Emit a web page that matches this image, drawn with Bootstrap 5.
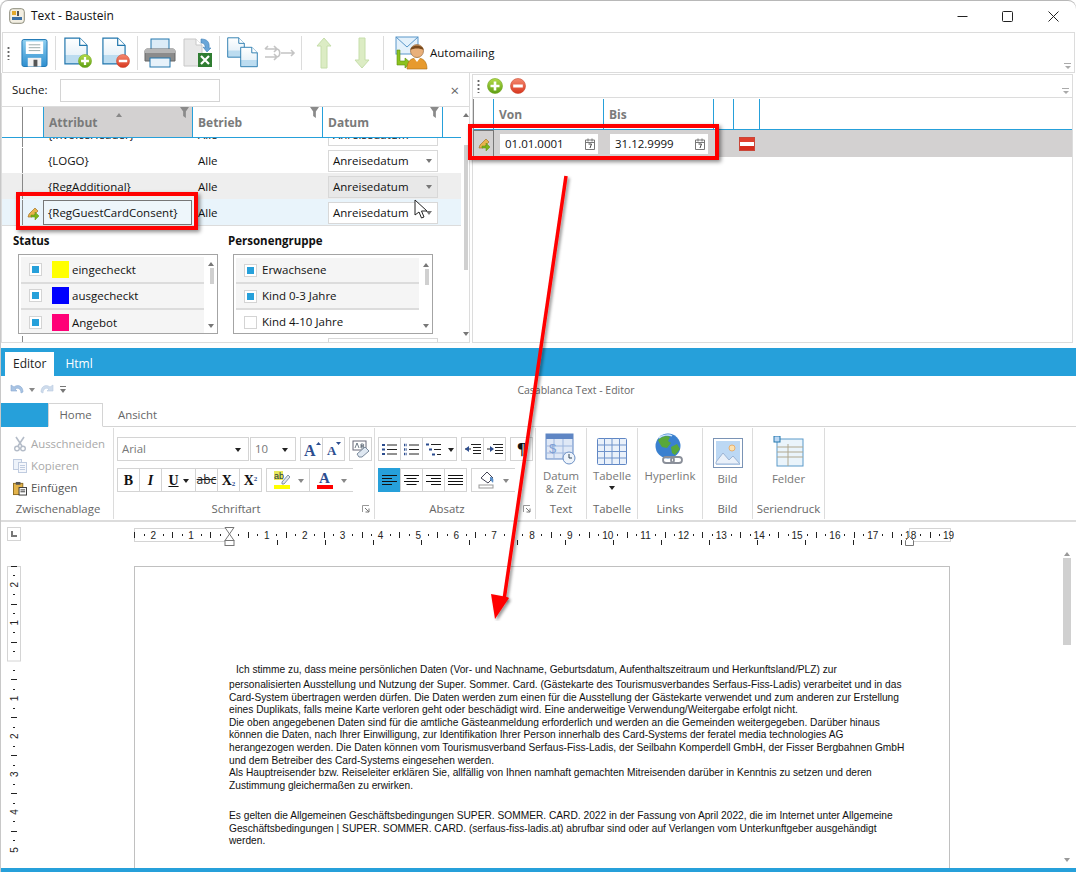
<!DOCTYPE html>
<html lang="de">
<head>
  <meta charset="UTF-8">
  <title>Text - Baustein</title>
  <link href="https://cdn.jsdelivr.net/npm/bootstrap@5.3.0/dist/css/bootstrap.min.css" rel="stylesheet">
  <style>
    body { margin: 0; background: #fff; font-family: "Open Sans", "Liberation Sans", sans-serif; font-size: 11.5px; color: #111; }
    .app-window { width: 1076px; height: 872px; overflow: hidden; position: relative; border-left: 1px solid #c8c8c8; border-radius: 8px 8px 0 0; box-shadow: inset 0 1px 0 #b8b8b8; }
    .icon-defs { display: block; width: 0; height: 0; }
    .flex-none { flex: none; }

    /* title bar */
    .title-bar { height: 32px; padding-left: 8px; font-size: 12px; }
    .title-icon { margin-right: 6px; }
    .win-btn { width: 45.5px; height: 30px; }

    /* toolbar */
    .tool-bar { height: 41px; margin: 0 1px; border: 1px solid #dcdcdc; position: relative; flex: none; }
    .grip { width: 3px; height: 14px; margin: 0 5px 0 4px; background: radial-gradient(circle, #666 1px, transparent 1.2px) 0 0 / 3px 4px; flex: none; }
    .tb-btn { width: 38px; flex: none; }
    .tb-sep { width: 1px; height: 34px; background: #dcdcdc; margin: 0 3px 0 2px; flex: none; }
    .more-arrow { position: absolute; right: 3px; bottom: 3px; width: 7px; height: 6px; border-top: 1px solid #aaa; }
    .more-arrow::after { content: ""; position: absolute; left: 1px; top: 2px; border: 3px solid transparent; border-top: 3px solid #aaa; }
    .tool-label { margin-left: 1px; }

    /* top panels */
    .panels { height: 275px; flex: none; }
    .left-panel { width: 469px; height: 270px; border: 1px solid #dcdcdc; border-top: 0; flex: none; overflow: hidden; }
    .search-bar { height: 34px; border-bottom: 1px solid #dcdcdc; padding: 1px 0 0 10px; }
    .search-input { width: 160px; height: 23px; margin-left: 13px; border: 1px solid #d4d4d4; }
    .search-x { margin-left: auto; margin-right: 10px; color: #666; font-size: 15px; line-height: 1; }
    .grid-side { width: 459px; flex: none; }
    .grid-head { height: 31px; border-bottom: 1px solid #26a0da; }
    .cell-gutter { width: 20px; flex: none; }
    .cell-select { width: 21px; flex: none; align-self: stretch; border-left: 1px solid #888; }
    .cell-attr { width: 149px; flex: none; padding-left: 5px; }
    .cell-firm { width: 130px; flex: none; padding-left: 6px; }
    .cell-date { width: 120px; flex: none; padding-left: 6px; }
    .head-cell { align-self: stretch; border-left: 1px solid #26a0da; font-weight: 700; color: #7a7a7a; font-size: 12px; position: relative; padding-top: 7px; padding-left: 5px; }
    .head-end { border-left: 1px solid #26a0da; align-self: stretch; width: 1px; }
    .head-sorted { background: #d3d1d1; }
    .funnel { position: absolute; right: 3px; top: 0; }
    .sort-up { position: absolute; left: 72px; top: 3px; border: 3px solid transparent; border-bottom: 4px solid #888; }
    .grid-body { height: 204px; overflow: hidden; }
    .grid-row { height: 26px; padding-top: 1px; }
    .row-clipped { margin-top: -17px; height: 26px; }
    .row-alt { background: #eee; }
    .row-sel { background: #e9f4fb; }
    .cell-edit { align-self: stretch; border: 1px solid #777; background: #eef6fb; display: flex; align-items: center; padding-left: 4px; }
    .combo { width: 110px; height: 22px; border: 1px solid #d8d8d8; background: #fff; padding-left: 4px; display: flex; align-items: center; justify-content: space-between; padding-right: 5px; }
    .row-alt .combo { background: #e8e8e8; }
    .combo::after { content: ""; border: 3.5px solid transparent; border-top: 4px solid #777; margin-top: 4px; }
    .filter-area { height: 110px; border-top: 1px solid #dcdcdc; padding-left: 11px; position: relative; }
    .filter-col { width: 215px; flex: none; }
    .filter-title { font-weight: 700; font-size: 11.5px; height: 28px; padding-top: 6px; }
    .filter-box { width: 200px; height: 80px; margin-left: 5px; border: 1px solid #a4a4a4; padding: 3px 2px 0; overflow: hidden; }
    .filter-box.status-box { padding-top: 2px; }
    .filter-list { width: 183px; flex: none; }
    .filter-item { height: 26px; border-bottom: 2px solid #dcdcdc; background: #f5f5f5; flex: none; }
    .filter-item.tall { height: 26.5px; }
    .filter-item.plain { background: #fff; border: 0; padding-bottom: 2px; }
    .chk { width: 13px; height: 13px; border: 1px solid #d4d4d4; background: #fff; padding: 2px; margin: 0 5px 0 8px; flex: none; }
    .tall .chk { margin-right: 7px; }
    .chk.on::before { content: ""; display: block; width: 7px; height: 7px; background: #26a0da; }
    .swatch { width: 17px; height: 17px; margin: 0 3px 0 3px; flex: none; }
    .swatch-yellow { background: #ff0; }
    .swatch-blue { background: #00f; }
    .swatch-pink { background: #f07; }
    .mini-scroll { width: 13px; position: relative; flex: none; margin-left: 1px; }
    .mini-thumb { width: 4px; height: 16px; background: #d0d0d0; margin: 11px auto 0; }
    .mini-scroll::before, .mini-scroll::after { content: ""; position: absolute; left: 3px; border: 3px solid transparent; }
    .mini-scroll::before { top: 2px; border-bottom: 4px solid #777; }
    .mini-scroll::after { bottom: 2px; border-top: 4px solid #777; }
    .panel-scroll { width: 10px; position: relative; flex: none; }
    .panel-thumb { width: 4px; height: 125px; background: #d0d0d0; margin: 38px auto 0; }
    .panel-scroll::before, .panel-scroll::after { content: ""; position: absolute; left: 2px; border: 3px solid transparent; }
    .panel-scroll::before { top: 3px; border-bottom: 4px solid #777; }
    .panel-scroll::after { bottom: 3px; border-top: 4px solid #777; }

    .right-panel { width: 601px; height: 269px; border: 1px solid #dcdcdc; margin: 1px 0 0 2px; flex: none; overflow: hidden; }
    .right-bar { height: 23px; border-bottom: 1px solid #dcdcdc; position: relative; }
    .right-bar .grip { margin-right: 7px; }
    .badge-gap { margin-left: 7px; }
    .date-head { height: 31px; margin-top: 1px; border-bottom: 1px solid #26a0da; border-left: 1px solid #888; }
    .date-gutter { width: 19px; flex: none; }
    .date-col { border-left: 1px solid #26a0da; align-self: stretch; font-weight: 700; color: #7a7a7a; font-size: 12px; padding: 7px 0 0 5px; flex: none; }
    .col-von, .col-bis { width: 110px; }
    .col-x { width: 20px; padding: 0; }
    .col-y { width: 26px; padding: 0; }
    .date-row { height: 27px; background: #d3d1d1; }
    .date-select { width: 21px; align-self: stretch; border: 1px solid #777; flex: none; }
    .date-input { width: 98px; height: 20px; margin-left: 6px; background: #fff; padding: 0 3px 0 5px; flex: none; font-size: 11.5px; }
    .date-next { margin-left: 12px; }
    .flag-cell { margin-left: 31px; }

    /* editor */
    .tab-strip { height: 28px; background: #26a0da; padding: 4px 0 0 4px; flex: none; }
    .doc-tab { height: 24px; padding: 0 8px; font-size: 12px; color: #fff; margin-right: 3px; }
    .doc-tab.active { background: #fff; color: #222; }
    .quick-bar { height: 27px; position: relative; flex: none; padding-left: 9px; gap: 5px; }
    .quick-title { position: absolute; left: 0; right: 0; top: 7px; text-align: center; padding-left: 75px; color: #666; font-size: 10.5px; }
    .ribbon-tabs { height: 24px; flex: none; border-bottom: 1px solid #d4d4d4; }
    .file-tab { width: 47px; height: 24px; background: #26a0da; flex: none; }
    .rib-tab { height: 24px; padding: 0 11px; color: #666; font-size: 11.4px; }
    .rib-tab.active { width: 55px; border: 1px solid #d4d4d4; border-bottom: 1px solid #fff; background: #fff; justify-content: center; padding: 0; margin-right: 4px; }
    .ribbon-body { height: 95px; flex: none; border-bottom: 2px solid #dcdcdc; padding-left: 2px; }
    .rib-group { height: 91px; margin-top: 1px; border-right: 1px solid #dcdcdc; position: relative; flex: none; padding-top: 5px; }
    .rib-label { position: absolute; left: 0; right: 0; bottom: 2px; text-align: center; color: #666; font-size: 11.4px; line-height: 16px; }
    .label-launch { padding-right: 16px; }
    .launcher { position: absolute; right: 4px; bottom: 6px; }
    .clip-row { height: 22px; padding-left: 10px; color: #a9a9a9; font-size: 11.4px; }
    .clip-row svg { margin-right: 4px; }
    .clip-row.on { color: #555; }
    .btn-row { height: 24px; margin-left: 4px; margin-bottom: 7px; }
    .rbtn { height: 24px; border: 1px solid #d4d4d4; margin-left: -1px; flex: none; background: #fff; }
    .rbtn.sel { background: #26a0da; border-color: #26a0da; }
    .drop { border: 3px solid transparent; border-top: 4px solid #888; margin-top: 4px; flex: none; }
    .drop.dark { border-top-color: #222; }
    .font-box { color: #777; font-size: 11.4px; padding-left: 4px; padding-right: 7px; justify-content: space-between; }
    .big-btn { text-align: center; color: #777; font-size: 11.4px; line-height: 13px; }
    .big-btn svg { display: block; margin: 0 auto 4px; }
    .rbold { font-family: "Liberation Serif", serif; font-weight: 700; font-size: 14px; color: #111; }
    .group-clip { width: 111px; }
    .group-font { width: 261px; padding-top: 9px; }
    .group-para { width: 161px; padding-top: 9px; }
    .w-text, .w-table { width: 51px; }
    .w-links { width: 65px; }
    .w-pic { width: 50px; }
    .w-field { width: 72px; }
    .box-name { width: 132px; }
    .box-size { width: 46px; margin-left: 1px !important; }
    .btn-23 { width: 23px; }
    .btn-35 { width: 35px; }
    .btn-44 { width: 44px; }
    .no-right { border-right: 0; }
    .abc-label { font-size: 12px; color: #222; }
    .sub-blue { color: #2c4d8f; font-size: 7px; }
    .pilcrow { font-size: 17px; }
    .mt-tbl { margin-top: 5px !important; }
    .mt-pic { margin-top: 5px !important; }
    .mt-field { margin-top: 3px !important; }
    .tbl-drop { width: 0; }

    /* ruler and page */
    .ruler-row { height: 44px; flex: none; position: relative; }
    .ruler-corner { width: 14px; height: 14px; margin: 5px 0 0 6px; border: 1px solid #d4d4d4; padding: 2px; flex: none; align-self: flex-start; }
    .ruler-corner::before { content: ""; display: block; width: 6px; height: 6px; margin: 1px; border-left: 2px solid #777; border-bottom: 2px solid #777; }
    .ruler-svg { margin: -1px 0 0 113px; display: block; flex: none; }
    .doc-area { height: 302px; flex: none; }
    .v-ruler-col { width: 133px; flex: none; padding-left: 6px; }
    .doc-page { width: 816px; flex: none; border: 1px solid #c0c0c0; border-bottom: 0; padding: 97px 0 0 94px; font-family: "Liberation Sans", sans-serif; font-size: 10.2px; line-height: 12.6px; color: #111; white-space: nowrap; }
    .doc-page p { margin: 0; }
    .doc-first { padding-left: 7px; margin-bottom: 2.5px !important; }
    .doc-second { margin-top: 17.5px !important; }
    .doc-scroll { width: 10px; margin-left: 112px; position: relative; flex: none; }
    .doc-thumb { width: 8px; height: 87px; background: #d0d0d0; margin: -8px auto 0; }
    .doc-scroll::before, .doc-scroll::after { content: ""; position: absolute; left: 2px; border: 3px solid transparent; }
    .doc-scroll::before { top: -17px; border-bottom: 4px solid #999; }
    .doc-scroll::after { bottom: 3px; border-top: 4px solid #999; }
    .bottom-line { height: 4px; background: #26a0da; flex: none; }

    /* annotations over the screenshot */
    .mark-box { position: absolute; border: 4px solid #f00; box-shadow: 2px 2px 4px rgba(0,0,0,.45); pointer-events: none; }
    .mark-left { left: 15px; top: 192px; width: 182px; height: 38px; }
    .mark-right { left: 467px; top: 124px; width: 251px; height: 36px; }
    .arrow-layer { position: absolute; left: -1px; top: 0; }
    .cursor-layer { position: absolute; left: 413px; top: 199px; }
  </style>
</head>
<body>
  <svg class="icon-defs" xmlns="http://www.w3.org/2000/svg">
    <defs>
      <linearGradient id="pageFill" x1="0" y1="0" x2="0" y2="1"><stop offset="0" stop-color="#fff"/><stop offset=".65" stop-color="#e8f2f9"/><stop offset=".66" stop-color="#bcdcf0"/><stop offset="1" stop-color="#bcdcf0"/></linearGradient>
      <linearGradient id="blueFill" x1="0" y1="0" x2="0" y2="1"><stop offset="0" stop-color="#8fd0f0"/><stop offset="1" stop-color="#2f8fcf"/></linearGradient>
      <linearGradient id="greenFill" x1="0" y1="0" x2="0" y2="1"><stop offset="0" stop-color="#b5dc4a"/><stop offset="1" stop-color="#5d9e13"/></linearGradient>
      <linearGradient id="redFill" x1="0" y1="0" x2="0" y2="1"><stop offset="0" stop-color="#f58a70"/><stop offset="1" stop-color="#d8361e"/></linearGradient>
      <symbol id="plusBadge" viewBox="0 0 16 16"><circle cx="8" cy="8" r="7.5" fill="url(#greenFill)" stroke="#6fa51e" stroke-width=".6"/><path d="M8 3.5v9M3.5 8h9" stroke="#fff" stroke-width="2.6"/></symbol>
      <symbol id="minusBadge" viewBox="0 0 16 16"><circle cx="8" cy="8" r="7.5" fill="url(#redFill)" stroke="#c9472f" stroke-width=".6"/><path d="M3.2 8h9.6" stroke="#fff" stroke-width="3"/></symbol>
      <symbol id="pageIcon" viewBox="0 0 26 30"><path d="M1 1h16l8 8v20H1z" fill="url(#pageFill)" stroke="#2277ad" stroke-width="1.3"/><path d="M17 1v8h8" fill="#fff" stroke="#2277ad" stroke-width="1.3"/></symbol>
      <symbol id="pencilIcon" viewBox="0 0 14 14"><path d="M2 11l1-3 6-6 3 3-6 6z" fill="#e9b44c" stroke="#a3752a" stroke-width=".7"/><path d="M5 9h4V6l4 4-4 4v-3H5z" fill="#7cb518" stroke="#5d8f10" stroke-width=".5"/></symbol>
      <symbol id="funnelIcon" viewBox="0 0 10 12"><path d="M0 0h10L6.5 5v7l-3-2V5z" fill="#8a8a8a"/></symbol>
      <symbol id="calIcon" viewBox="0 0 10 12"><path d="M.5 2h9v9.5h-9zM.5 4.5h9M3 .5v3M7 .5v3" fill="none" stroke="#777"/><path d="M3.5 6h3L5 10" fill="none" stroke="#444"/></symbol>
    </defs>
  </svg>

  <div class="app-window d-flex flex-column">
    <!-- title bar -->
    <div class="title-bar d-flex align-items-center flex-none">
      <svg class="title-icon" width="16" height="16" viewBox="0 0 16 16"><rect x=".7" y=".7" width="14.6" height="14.6" rx="3" fill="#f3efe3" stroke="#8a8a7a"/><rect x="3" y="3" width="4" height="4" fill="#e3a92c"/><rect x="8" y="3" width="2" height="5" fill="#555"/><rect x="3" y="9" width="10" height="3" fill="#3a6ea5"/></svg>
      <span>Text - Baustein</span>
      <div class="d-flex ms-auto">
        <div class="win-btn d-flex align-items-center justify-content-center"><svg width="11" height="11"><path d="M.5 5.5h10" stroke="#222"/></svg></div>
        <div class="win-btn d-flex align-items-center justify-content-center"><svg width="11" height="11"><rect x=".5" y=".5" width="10" height="10" rx="1" fill="none" stroke="#222"/></svg></div>
        <div class="win-btn d-flex align-items-center justify-content-center"><svg width="11" height="11"><path d="M.5.5l10 10M10.5.5l-10 10" stroke="#222"/></svg></div>
      </div>
    </div>

    <!-- main toolbar -->
    <div class="tool-bar d-flex align-items-center">
      <span class="grip"></span>
      <div class="tb-btn text-center">
        <svg width="27" height="30" viewBox="0 0 28 30"><path d="M1 3a2 2 0 0 1 2-2h22a2 2 0 0 1 2 2v24a2 2 0 0 1-2 2H3a2 2 0 0 1-2-2z" fill="url(#blueFill)" stroke="#1f78b4"/><rect x="5" y="3" width="18" height="13" fill="#fff"/><path d="M8 6.5h12M8 9.5h12M8 12.5h12" stroke="#9aa" stroke-width="1"/><rect x="7" y="20" width="14" height="9" fill="#f2f2f2"/><rect x="13" y="22" width="4" height="7" fill="#555"/></svg>
      </div>
      <span class="tb-sep"></span>
      <div class="tb-btn text-center"><svg width="30" height="32" viewBox="0 0 30 32"><use href="#pageIcon" x="1" y="0" width="24" height="28"/><use href="#plusBadge" x="15" y="17" width="14" height="14"/></svg></div>
      <div class="tb-btn text-center"><svg width="30" height="32" viewBox="0 0 30 32"><use href="#pageIcon" x="1" y="0" width="24" height="28"/><use href="#minusBadge" x="15" y="17" width="14" height="14"/></svg></div>
      <span class="tb-sep"></span>
      <div class="tb-btn text-center">
        <svg width="32" height="32" viewBox="0 0 32 32"><rect x="7" y="2" width="18" height="11" fill="#dcecf7" stroke="#2277ad"/><path d="M1 14a2 2 0 0 1 2-2h26a2 2 0 0 1 2 2v10H1z" fill="#8b8b8b" stroke="#666"/><rect x="1" y="12" width="30" height="4" fill="#b5b5b5"/><rect x="6" y="21" width="20" height="9" fill="#e7f2fa" stroke="#2277ad"/></svg>
      </div>
      <div class="tb-btn text-center">
        <svg width="32" height="32" viewBox="0 0 32 32"><path d="M2 2h12l6 6v21H2z" fill="#e8e8e8" stroke="#c8c8c8"/><path d="M14 2v6h6" fill="#fff" stroke="#c8c8c8"/><path d="M19 2c6 0 9 3 8 9l2 0-4 4-4-5 2 1c.5-3-1-5-4-5z" fill="#6aa6d8" stroke="#3f7fb5" stroke-width=".6"/><rect x="16" y="16" width="14" height="14" fill="#2f7d32"/><path d="M19 19l8 8M27 19l-8 8" stroke="#fff" stroke-width="2.2"/></svg>
      </div>
      <span class="tb-sep"></span>
      <div class="tb-btn text-center">
        <svg width="32" height="32" viewBox="0 0 32 32"><use href="#pageIcon" x="1" y="0" width="18" height="21"/><use href="#pageIcon" x="14" y="9" width="18" height="22"/></svg>
      </div>
      <div class="tb-btn text-center">
        <svg width="32" height="18" viewBox="0 0 32 18"><path d="M1 5h11c5 0 5 8 0 8H1M17 9h13M27 6l3 3-3 3M1 5l3-3M10 2l3 3-3 3M10 10l3 3-3 3" fill="none" stroke="#c4c4c4" stroke-width="1.6"/></svg>
      </div>
      <span class="tb-sep"></span>
      <div class="tb-btn text-center"><svg width="16" height="32" viewBox="0 0 16 32"><path d="M8 1l7 8h-4v22H5V9H1z" fill="#dcecc4" stroke="#c6deaa"/></svg></div>
      <div class="tb-btn text-center"><svg width="16" height="32" viewBox="0 0 16 32"><path d="M8 31l7-8h-4V1H5v22H1z" fill="#dcecc4" stroke="#c6deaa"/></svg></div>
      <span class="tb-sep"></span>
      <div class="d-flex align-items-center ms-2">
        <svg width="34" height="34" viewBox="0 0 34 34"><rect x="1" y="1" width="22" height="17" fill="#e4f1fb" stroke="#5a97c9"/><path d="M1 1l11 10L23 1" fill="none" stroke="#5a97c9"/><path d="M5 14v11h5v-3l6 5-6 5v-3H2V14z" fill="#8cc21f" stroke="#5d8f10" stroke-width=".6"/><circle cx="22" cy="15" r="6.5" fill="#e9b07a" stroke="#8a5a2c" stroke-width=".6"/><path d="M15.5 14c0-6 13-6 13 0-3-2-10-2-13 0z" fill="#7a4a1c"/><path d="M12 33c0-8 4-11 10-11s10 3 10 11z" fill="#e79a2d" stroke="#a96d14" stroke-width=".6"/><path d="M19 22l3 4 3-4z" fill="#fff"/></svg>
        <span class="tool-label">Automailing</span>
      </div>
      <span class="more-arrow"></span>
    </div>

    <!-- attribute grid and validity grid -->
    <div class="panels d-flex">
      <div class="left-panel">
        <div class="search-bar d-flex align-items-center">
          <span>Suche:</span>
          <div class="search-input"></div>
          <span class="search-x">×</span>
        </div>
        <div class="d-flex">
          <div class="grid-side">
            <div class="grid-head d-flex">
              <div class="cell-gutter"></div>
              <div class="cell-select"></div>
              <div class="cell-attr head-cell head-sorted">Attribut<span class="sort-up"></span><svg class="funnel" width="9" height="11"><use href="#funnelIcon"/></svg></div>
              <div class="cell-firm head-cell">Betrieb<svg class="funnel" width="9" height="11"><use href="#funnelIcon"/></svg></div>
              <div class="cell-date head-cell">Datum<svg class="funnel" width="9" height="11"><use href="#funnelIcon"/></svg></div>
              <div class="head-end"></div>
            </div>
            <div class="grid-body">
              <div class="grid-row row-clipped d-flex align-items-center">
                <div class="cell-gutter"></div><div class="cell-select"></div>
                <div class="cell-attr">{InvoiceHeader}</div><div class="cell-firm">Alle</div>
                <div class="cell-date"><div class="combo">Anreisedatum</div></div>
              </div>
              <div class="grid-row d-flex align-items-center">
                <div class="cell-gutter"></div><div class="cell-select"></div>
                <div class="cell-attr">{LOGO}</div><div class="cell-firm">Alle</div>
                <div class="cell-date"><div class="combo">Anreisedatum</div></div>
              </div>
              <div class="grid-row row-alt d-flex align-items-center">
                <div class="cell-gutter"></div><div class="cell-select"></div>
                <div class="cell-attr">{RegAdditional}</div><div class="cell-firm">Alle</div>
                <div class="cell-date"><div class="combo">Anreisedatum</div></div>
              </div>
              <div class="grid-row row-sel d-flex align-items-center">
                <div class="cell-gutter"></div>
                <div class="cell-select d-flex align-items-center justify-content-center"><svg width="14" height="14"><use href="#pencilIcon"/></svg></div>
                <div class="cell-attr cell-edit">{RegGuestCardConsent}</div><div class="cell-firm">Alle</div>
                <div class="cell-date"><div class="combo">Anreisedatum</div></div>
              </div>
              <div class="filter-area d-flex">
                <div class="filter-col">
                  <div class="filter-title">Status</div>
                  <div class="filter-box status-box d-flex">
                    <div class="filter-list">
                      <div class="filter-item tall d-flex align-items-center"><span class="chk on"></span><span class="swatch swatch-yellow"></span>eingecheckt</div>
                      <div class="filter-item tall d-flex align-items-center"><span class="chk on"></span><span class="swatch swatch-blue"></span>ausgecheckt</div>
                      <div class="filter-item tall d-flex align-items-center"><span class="chk on"></span><span class="swatch swatch-pink"></span>Angebot</div>
                    </div>
                    <div class="mini-scroll"><div class="mini-thumb"></div></div>
                  </div>
                </div>
                <div class="filter-col">
                  <div class="filter-title">Personengruppe</div>
                  <div class="filter-box d-flex">
                    <div class="filter-list">
                      <div class="filter-item d-flex align-items-center"><span class="chk on"></span>Erwachsene</div>
                      <div class="filter-item d-flex align-items-center"><span class="chk on"></span>Kind 0-3 Jahre</div>
                      <div class="filter-item plain d-flex align-items-center"><span class="chk"></span>Kind 4-10 Jahre</div>
                    </div>
                    <div class="mini-scroll"><div class="mini-thumb"></div></div>
                  </div>
                </div>
              </div>
              <div class="grid-row d-flex align-items-center">
                <div class="cell-gutter"></div><div class="cell-select"></div>
                <div class="cell-attr"></div><div class="cell-firm"></div>
                <div class="cell-date"><div class="combo"></div></div>
              </div>
            </div>
          </div>
          <div class="panel-scroll"><div class="panel-thumb"></div></div>
        </div>
      </div>

      <div class="right-panel">
        <div class="right-bar d-flex align-items-center">
          <span class="grip"></span>
          <svg width="16" height="16"><use href="#plusBadge"/></svg>
          <svg width="16" height="16" class="badge-gap"><use href="#minusBadge"/></svg>
          <span class="more-arrow"></span>
        </div>
        <div class="date-head d-flex">
          <div class="date-gutter"></div>
          <div class="date-col col-von">Von</div>
          <div class="date-col col-bis">Bis</div>
          <div class="date-col col-x"></div>
          <div class="date-col col-y"></div>
          <div class="date-col"></div>
        </div>
        <div class="date-row d-flex align-items-center">
          <div class="date-select d-flex align-items-center justify-content-center"><svg width="14" height="14"><use href="#pencilIcon"/></svg></div>
          <div class="date-input d-flex align-items-center justify-content-between">01.01.0001<svg width="10" height="12"><use href="#calIcon"/></svg></div>
          <div class="date-input date-next d-flex align-items-center justify-content-between">31.12.9999<svg width="10" height="12"><use href="#calIcon"/></svg></div>
          <div class="flag-cell">
            <svg class="d-block" width="16" height="14" viewBox="0 0 16 14"><rect x=".5" y=".5" width="15" height="13" fill="#fff" stroke="#c9473a"/><rect x="1" y="1" width="14" height="4" fill="#e0402e"/><rect x="1" y="9" width="14" height="4" fill="#d62c1c"/></svg>
          </div>
        </div>
      </div>
    </div>

    <!-- editor -->
    <div class="tab-strip d-flex">
      <div class="doc-tab active d-flex align-items-center">Editor</div>
      <div class="doc-tab d-flex align-items-center">Html</div>
    </div>
    <div class="quick-bar d-flex align-items-center">
      <svg width="14" height="12" viewBox="0 0 14 12"><path d="M1 1v6h6L5 5c3-2 6 0 6 4l2-1c0-6-5-8-9-5z" fill="#a9c4e4" stroke="#8aaad0" stroke-width=".6"/></svg>
      <span class="drop"></span>
      <svg width="14" height="12" viewBox="0 0 14 12"><path d="M13 1v6H7l2-2C6 3 3 5 3 9L1 8c0-6 5-8 9-5z" fill="#cfdcec" stroke="#b9cbe0" stroke-width=".6"/></svg>
      <svg width="8" height="9" viewBox="0 0 8 9"><path d="M1 1.5h6" stroke="#777"/><path d="M1 4h6L4 8z" fill="#777"/></svg>
      <span class="quick-title">Casablanca Text - Editor</span>
    </div>
    <div class="ribbon-tabs d-flex">
      <div class="file-tab"></div>
      <div class="rib-tab active d-flex align-items-center">Home</div>
      <div class="rib-tab d-flex align-items-center">Ansicht</div>
    </div>
    <div class="ribbon-body d-flex">
      <div class="rib-group group-clip">
        <div class="clip-row d-flex align-items-center"><svg width="14" height="16" viewBox="0 0 14 16"><path d="M3 1l6 9M11 1L5 10" stroke="#b4bcc8" stroke-width="1.6"/><circle cx="4" cy="12.5" r="2.3" fill="none" stroke="#b4bcc8" stroke-width="1.4"/><circle cx="10" cy="12.5" r="2.3" fill="none" stroke="#b4bcc8" stroke-width="1.4"/></svg>Ausschneiden</div>
        <div class="clip-row d-flex align-items-center"><svg width="14" height="14" viewBox="0 0 14 14"><rect x=".5" y=".5" width="8" height="10" fill="#eef3fa" stroke="#c0cce0"/><rect x="5.5" y="3.5" width="8" height="10" fill="#f6f8fc" stroke="#c0cce0"/><path d="M7 6.5h5M7 8.5h5M7 10.5h5" stroke="#c0cce0"/></svg>Kopieren</div>
        <div class="clip-row on d-flex align-items-center"><svg width="14" height="15" viewBox="0 0 15 15"><rect x=".5" y="2" width="10" height="12" fill="#e3b34a" stroke="#8d6a1c"/><rect x="3" y=".5" width="5" height="3" fill="#555"/><rect x="6.5" y="6.5" width="8" height="8" fill="#fff" stroke="#333"/><path d="M8 9h5M8 11h5" stroke="#333"/></svg>Einfügen</div>
        <div class="rib-label">Zwischenablage</div>
      </div>
      <div class="rib-group group-font">
        <div class="btn-row d-flex">
          <div class="rbtn font-box d-flex align-items-center box-name">Arial<span class="drop dark"></span></div>
          <div class="rbtn font-box d-flex align-items-center box-size">10<span class="drop dark"></span></div>
          <div class="rbtn d-flex align-items-center justify-content-center btn-23 ms-1">
            <svg width="18" height="16" viewBox="0 0 18 16"><text x="1" y="15" font-size="16" font-weight="700" font-family="Liberation Serif" fill="#2c4d8f">A</text><path d="M13 4l2.5-3 2.5 3z" fill="#2c4d8f"/></svg>
          </div>
          <div class="rbtn d-flex align-items-center justify-content-center btn-23">
            <svg width="16" height="16" viewBox="0 0 16 16"><text x="1" y="14" font-size="13" font-weight="700" font-family="Liberation Serif" fill="#2c4d8f">A</text><path d="M10 1l2.5 3 2.5-3z" fill="#2c4d8f"/></svg>
          </div>
          <div class="rbtn d-flex align-items-center justify-content-center btn-23 ms-1"><svg width="18" height="18" viewBox="0 0 18 18"><rect x="1" y="1" width="13" height="9" fill="#fff" stroke="#667"/><path d="M3 8l2-5 2 5M9 4h2c1 0 1 2 0 2h-2zM9 6h2c1 0 1 2 0 2h-2z" fill="none" stroke="#345" stroke-width=".7"/><path d="M5 14l8-7 4 4-7 6H7z" fill="#dfe8f2" stroke="#7a8a9c"/></svg></div>
        </div>
        <div class="btn-row d-flex">
          <div class="rbtn d-flex align-items-center justify-content-center btn-23"><span class="rbold">B</span></div>
          <div class="rbtn d-flex align-items-center justify-content-center btn-23"><span class="rbold fst-italic">I</span></div>
          <div class="rbtn d-flex align-items-center justify-content-center btn-35 gap-1"><span class="rbold text-decoration-underline">U</span><span class="drop dark"></span></div>
          <div class="rbtn d-flex align-items-center justify-content-center btn-23"><span class="text-decoration-line-through abc-label">abc</span></div>
          <div class="rbtn d-flex align-items-center justify-content-center btn-23"><span class="rbold">X<sub class="sub-blue">2</sub></span></div>
          <div class="rbtn d-flex align-items-center justify-content-center btn-23"><span class="rbold">X<sup class="sub-blue">2</sup></span></div>
          <div class="rbtn d-flex align-items-center justify-content-center gap-2 btn-44 ms-1 no-right">
            <svg width="16" height="20" viewBox="0 0 16 20"><rect x="0" y="1" width="9" height="9" fill="#e8e85a"/><text x="0" y="9" font-size="9" font-family="Liberation Sans" fill="#234">ab</text><path d="M8 12l6-7 2 2-6 7H8z" fill="#dde6f0" stroke="#6a7a8c" stroke-width=".8"/><rect x="0" y="15" width="16" height="4" fill="#ff0"/></svg>
            <span class="drop"></span>
          </div>
          <div class="rbtn d-flex align-items-center justify-content-center gap-2 btn-44 no-right">
            <svg width="16" height="20" viewBox="0 0 16 20"><text x="2" y="13" font-size="15" font-weight="700" font-family="Liberation Serif" fill="#2c4d8f">A</text><rect x="0" y="15" width="16" height="4" fill="#f00"/></svg>
            <span class="drop"></span>
          </div>
        </div>
        <div class="rib-label label-launch">Schriftart</div>
        <svg class="launcher" width="8" height="8"><path d="M.5 7V.5H7" fill="none" stroke="#999"/><path d="M3 3l4 4M7 3.5V7H3.5" fill="none" stroke="#777"/></svg>
      </div>
      <div class="rib-group group-para">
        <div class="btn-row d-flex">
          <div class="rbtn d-flex align-items-center justify-content-center btn-23"><svg width="15" height="13"><path d="M5 2h10M5 6.5h10M5 11h10" stroke="#222"/><path d="M0 2h3M0 6.5h3M0 11h3" stroke="#2c4d8f" stroke-width="2"/></svg></div>
          <div class="rbtn d-flex align-items-center justify-content-center btn-23"><svg width="15" height="13"><path d="M5 2h10M5 6.5h10M5 11h10" stroke="#222"/><path d="M0 2h3M0 6.5h3M0 11h3" stroke="#2c4d8f" stroke-width="2.4" stroke-dasharray="1 .6"/></svg></div>
          <div class="rbtn d-flex align-items-center justify-content-center btn-35 gap-1"><svg width="18" height="13"><path d="M5 1.5h10M8 6.5h7M11 11.5h4" stroke="#222"/><path d="M0 1.5h3M3 6.5h3M6 11.5h3" stroke="#2c4d8f" stroke-width="2"/></svg><span class="drop dark"></span></div>
          <div class="rbtn d-flex align-items-center justify-content-center btn-23 ms-1"><svg width="16" height="13"><path d="M6 1.5h10M8 4.5h8M8 7.5h8M8 10.5h8M0 6h6" stroke="#222"/><path d="M0 6l4-3v6z" fill="#2c4d8f"/></svg></div>
          <div class="rbtn d-flex align-items-center justify-content-center btn-23"><svg width="16" height="13"><path d="M6 1.5h10M8 4.5h8M8 7.5h8M8 10.5h8M0 6h4" stroke="#222"/><path d="M7 6L3 3v6z" fill="#2c4d8f"/></svg></div>
          <div class="rbtn d-flex align-items-center justify-content-center btn-23 ms-1"><span class="rbold pilcrow">¶</span></div>
        </div>
        <div class="btn-row d-flex">
          <div class="rbtn sel d-flex align-items-center justify-content-center btn-23"><svg width="15" height="12"><path d="M0 1.5h15M0 4.5h10M0 7.5h15M0 10.5h10" stroke="#111"/></svg></div>
          <div class="rbtn d-flex align-items-center justify-content-center btn-23"><svg width="15" height="12"><path d="M0 1.5h15M2.5 4.5h10M0 7.5h15M2.5 10.5h10" stroke="#111"/></svg></div>
          <div class="rbtn d-flex align-items-center justify-content-center btn-23"><svg width="15" height="12"><path d="M0 1.5h15M5 4.5h10M0 7.5h15M5 10.5h10" stroke="#111"/></svg></div>
          <div class="rbtn d-flex align-items-center justify-content-center btn-23"><svg width="15" height="12"><path d="M0 1.5h15M0 4.5h15M0 7.5h15M0 10.5h15" stroke="#111"/></svg></div>
          <div class="rbtn d-flex align-items-center justify-content-center gap-2 btn-44 ms-1 no-right">
            <svg width="17" height="18" viewBox="0 0 17 18"><path d="M3 7l6-6 6 6-5 5z" fill="#fff" stroke="#445"/><path d="M12 6c3 0 4 2 3 6-1-1-2-3-3-3z" fill="#5a8fc9"/><rect x="1" y="14" width="14" height="3" fill="#fff" stroke="#999"/></svg>
            <span class="drop"></span>
          </div>
        </div>
        <div class="rib-label label-launch">Absatz</div>
        <svg class="launcher" width="8" height="8"><path d="M.5 7V.5H7" fill="none" stroke="#999"/><path d="M3 3l4 4M7 3.5V7H3.5" fill="none" stroke="#777"/></svg>
      </div>
      <div class="rib-group big-btn w-text">
        <svg width="32" height="32" viewBox="0 0 32 32"><rect x="1" y="1" width="27" height="25" fill="#dfe8f6" stroke="#5f86c4"/><rect x="1" y="1" width="27" height="5" fill="#5f86c4"/><path d="M1 13h27M1 20h27M9 6v20M18 6v20" stroke="#9db6de"/><text x="4" y="20" font-size="13" fill="#7d9fd4" font-family="Liberation Sans">$</text><circle cx="24" cy="25" r="6" fill="#eef4fb" stroke="#6b8fc4"/><path d="M24 21v4h3" fill="none" stroke="#345"/></svg>
        Datum<br>&amp; Zeit
        <div class="rib-label">Text</div>
      </div>
      <div class="rib-group big-btn w-table">
        <svg class="mt-tbl" width="30" height="27" viewBox="0 0 30 27"><rect x=".5" y=".5" width="29" height="26" rx="1" fill="#eaf1fa" stroke="#5f86c4"/><path d="M.5 7h29M.5 13.5h29M.5 20h29M7.5 0v27M15 0v27M22.5 0v27" stroke="#6f93cb"/></svg>
        Tabelle
        <span class="drop dark d-block mx-auto mt-1 tbl-drop"></span>
        <div class="rib-label">Tabelle</div>
      </div>
      <div class="rib-group big-btn w-links">
        <svg width="32" height="32" viewBox="0 0 32 32"><circle cx="14" cy="13" r="12.5" fill="#3a80cf"/><path d="M4 7c4-4 9-5 12-3l-2 4 3 2-4 5-5-1-2-3zM17 14l6-3 3 5-5 6-3-2z" fill="#58a83a"/><path d="M5 5c3-3 10-4 13-2" stroke="#cfe6fb" stroke-width="1.5" fill="none"/><rect x="9" y="24" width="11" height="6" rx="3" fill="none" stroke="#8a8f99" stroke-width="1.8"/><rect x="17" y="24" width="11" height="6" rx="3" fill="none" stroke="#8a8f99" stroke-width="1.8"/></svg>
        Hyperlink
        <div class="rib-label">Links</div>
      </div>
      <div class="rib-group big-btn w-pic">
        <svg class="mt-pic" width="30" height="30" viewBox="0 0 30 30"><rect x=".5" y=".5" width="29" height="29" fill="#fff" stroke="#7a93b5"/><rect x="3" y="3" width="24" height="24" fill="#bcd8f4"/><circle cx="19" cy="10" r="3" fill="#fde2b0" stroke="#e8b070"/><path d="M3 24l7-9 6 7 4-4 7 8H3z" fill="#e9f0f9" stroke="#9cb4d4"/></svg>
        Bild
        <div class="rib-label">Bild</div>
      </div>
      <div class="rib-group big-btn w-field">
        <svg class="mt-field" width="32" height="32" viewBox="0 0 32 32"><rect x="4" y="3" width="26" height="27" fill="#eaf4fb" stroke="#5a9ac9"/><path d="M4 11h26M4 16h26M4 21h26M15 8v22" stroke="#b0a890"/><rect x="1" y="0" width="6" height="6" fill="#bcd8f4" stroke="#2277ad"/></svg>
        Felder
        <div class="rib-label">Seriendruck</div>
      </div>
    </div>

    <div class="ruler-row d-flex">
      <div class="ruler-corner"></div>
      <svg id="hRuler" class="ruler-svg" width="820" height="26"></svg>
    </div>
    <div class="doc-area d-flex">
      <div class="v-ruler-col"><svg id="vRuler" class="d-block" width="15" height="302"></svg></div>
      <div class="doc-page">
        <p class="doc-first">Ich stimme zu, dass meine persönlichen Daten (Vor- und Nachname, Geburtsdatum, Aufenthaltszeitraum und Herkunftsland/PLZ) zur</p>
        <p>personalisierten Ausstellung und Nutzung der Super. Sommer. Card. (Gästekarte des Tourismusverbandes Serfaus-Fiss-Ladis) verarbeitet und in das<br>
        Card-System übertragen werden dürfen. Die Daten werden zum einen für die Ausstellung der Gästekarte verwendet und zum anderen zur Erstellung<br>
        eines Duplikats, falls meine Karte verloren geht oder beschädigt wird. Eine anderweitige Verwendung/Weitergabe erfolgt nicht.<br>
        Die oben angegebenen Daten sind für die amtliche Gästeanmeldung erforderlich und werden an die Gemeinden weitergegeben. Darüber hinaus<br>
        können die Daten, nach Ihrer Einwilligung, zur Identifikation Ihrer Person innerhalb des Card-Systems der feratel media technologies AG<br>
        herangezogen werden. Die Daten können vom Tourismusverband Serfaus-Fiss-Ladis, der Seilbahn Komperdell GmbH, der Fisser Bergbahnen GmbH<br>
        und dem Betreiber des Card-Systems eingesehen werden.<br>
        Als Hauptreisender bzw. Reiseleiter erklären Sie, allfällig von Ihnen namhaft gemachten Mitreisenden darüber in Kenntnis zu setzen und deren<br>
        Zustimmung gleichermaßen zu erwirken.</p>
        <p class="doc-second">Es gelten die Allgemeinen Geschäftsbedingungen SUPER. SOMMER. CARD. 2022 in der Fassung von April 2022, die im Internet unter Allgemeine<br>
        Geschäftsbedingungen | SUPER. SOMMER. CARD. (serfaus-fiss-ladis.at) abrufbar sind oder auf Verlangen vom Unterkunftgeber ausgehändigt<br>
        werden.</p>
      </div>
      <div class="doc-scroll"><div class="doc-thumb"></div></div>
    </div>
    <div class="bottom-line"></div>

    <!-- red annotations -->
    <div class="mark-box mark-left"></div>
    <div class="mark-box mark-right"></div>
    <svg class="arrow-layer" width="1076" height="872" viewBox="0 0 1076 872">
      <defs><filter id="arrowShadow" x="-20%" y="-5%" width="140%" height="110%"><feDropShadow dx="2" dy="2" stdDeviation="1.5" flood-color="#000" flood-opacity=".4"/></filter></defs>
      <path d="M566 176L504 600" stroke="#f00" stroke-width="3.5" fill="none" filter="url(#arrowShadow)"/>
      <path d="M495 619L491 594 507 597 509 598z" fill="#f00" filter="url(#arrowShadow)"/>
    </svg>
    <svg class="cursor-layer" width="14" height="20" viewBox="0 0 14 20"><path d="M1 1v15l4-3 2.5 6 2.5-1-2.5-6H13z" fill="#fff" stroke="#222"/></svg>
  </div>

  <script src="https://cdn.jsdelivr.net/npm/bootstrap@5.3.0/dist/js/bootstrap.bundle.min.js"></script>
  <script>
    // both rulers are just repeated ticks, so build them in a loop
    const unit = 37.87;
    const h = [];
    const zeroX = 95;
    h.push('<rect x="0.5" y="7.5" width="95" height="13" fill="#fff" stroke="#d4d4d4"/>');
    h.push('<rect x="775.5" y="7.5" width="41" height="13" fill="#fff" stroke="#d4d4d4"/>');
    for (let n = -3; n <= 19; n++) {
      const x = zeroX + n * unit;
      if (n !== 0 && n >= -2) {
        h.push(`<text x="${x}" y="18" text-anchor="middle" font-size="10" font-family="Liberation Sans" fill="#222">${Math.abs(n)}</text>`);
      }
      if (n < 19) {
        h.push(`<rect x="${Math.round(x + unit / 4)}" y="13" width="1" height="2" fill="#222"/>`);
        h.push(`<rect x="${Math.round(x + unit / 2)}" y="11" width="1" height="6" fill="#222"/>`);
        h.push(`<rect x="${Math.round(x + unit * 3 / 4)}" y="13" width="1" height="2" fill="#222"/>`);
      }
    }
    for (let x = 143; x <= 770; x += 48) {
      h.push(`<rect x="${x}" y="19" width="1" height="5" fill="#222"/>`);
    }
    h.push(`<path d="M${zeroX - 4} 6.5h9l-4.5 6.5 4.5 6.5h-9l4.5-6.5z" fill="#fff" stroke="#777"/><rect x="${zeroX - 4}" y="19.5" width="9" height="5" fill="#fff" stroke="#777"/>`);
    h.push('<path d="M771.5 24.5v-5l4-4 4 4v5z" fill="#fff" stroke="#777"/>');
    document.getElementById('hRuler').innerHTML = h.join('');

    const v = [];
    const zeroY = 94.5;
    v.push(`<rect x="0.5" y="0.5" width="13" height="${zeroY}" fill="#fff" stroke="#d4d4d4"/>`);
    for (let n = -3; n <= 5; n++) {
      const y = zeroY + n * unit;
      if (n !== 0 && n >= -2) {
        v.push(`<text transform="translate(11 ${y}) rotate(-90)" text-anchor="middle" font-size="10" font-family="Liberation Sans" fill="#222">${Math.abs(n)}</text>`);
      }
      if (n < 5) {
        v.push(`<rect x="6" y="${Math.round(y + unit / 4)}" width="2" height="1" fill="#222"/>`);
        v.push(`<rect x="4" y="${Math.round(y + unit / 2)}" width="6" height="1" fill="#222"/>`);
        v.push(`<rect x="6" y="${Math.round(y + unit * 3 / 4)}" width="2" height="1" fill="#222"/>`);
      }
    }
    document.getElementById('vRuler').innerHTML = v.join('');
  </script>
</body>
</html>
